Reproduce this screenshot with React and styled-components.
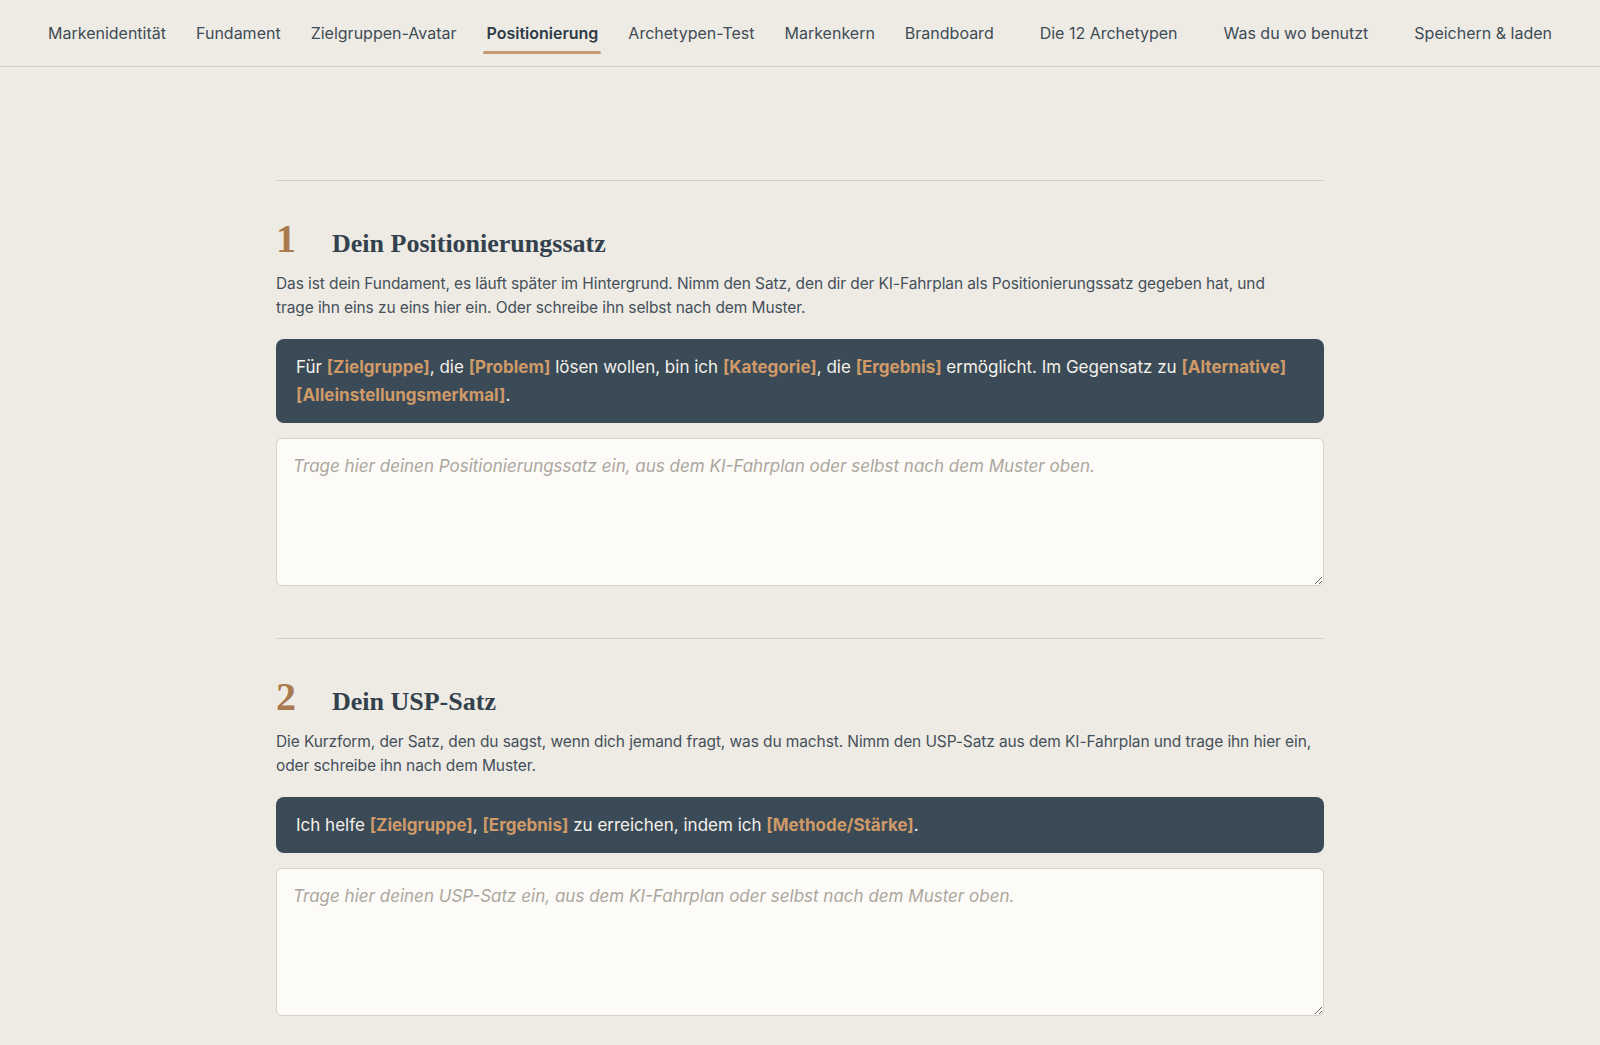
import React from "react";
import styled, { createGlobalStyle } from "styled-components";

const GlobalStyle = createGlobalStyle`
  * { box-sizing: border-box; }
  body {
    margin: 0;
    background: #eeebe4;
    font-family: "Inter", "Liberation Sans", sans-serif;
    color: #3b4753;
  }
`;

const NavBar = styled.nav`
  height: 67px;
  border-bottom: 1px solid #d3d0c8;
  padding: 0 46px;
  display: flex;
  align-items: center;
  justify-content: space-between;
`;

const TabGroup = styled.div`
  display: flex;
  align-items: center;
  gap: 26px;
`;

const Tab = styled.a`
  position: relative;
  padding: 0 2px;
  font-size: 16px;
  line-height: 22px;
  color: ${({ active }) => (active ? "#2d3b47" : "#3f4b56")};
  font-weight: ${({ active }) => (active ? 600 : 400)};
  text-decoration: none;
  cursor: pointer;
  &::after {
    content: "";
    display: ${({ active }) => (active ? "block" : "none")};
    position: absolute;
    left: -1px;
    right: -1px;
    bottom: -10px;
    height: 3px;
    border-radius: 2px;
    background: #c49a74;
  }
`;

const Main = styled.main`
  width: 1048px;
  margin: 0 auto;
  padding-top: 113px;
`;

const Section = styled.section`
  border-top: 1px solid #d4d0c6;
  padding: 34px 0 52px;
`;

const HeadRow = styled.div`
  display: flex;
  align-items: baseline;
  margin-bottom: 10px;
`;

const Num = styled.span`
  width: 56px;
  font-family: "Liberation Serif", "DejaVu Serif", serif;
  font-weight: 700;
  font-size: 40px;
  color: #a97a50;
`;

const Title = styled.h2`
  margin: 0;
  font-family: "Liberation Serif", "DejaVu Serif", serif;
  font-weight: 700;
  font-size: 26px;
  color: #33414d;
`;

const Lead = styled.p`
  margin: 0 0 20px;
  font-size: 15.5px;
  letter-spacing: -0.1px;
  line-height: 23.5px;
  color: #45505a;
`;

const Pattern = styled.div`
  background: #3b4a57;
  border-radius: 8px;
  padding: 14px 20px;
  font-size: 17px;
  line-height: 28px;
  color: #f4f1ea;
  margin-bottom: 15px;
`;

const Slot = styled.span`
  color: #cf9a68;
  font-weight: 700;
`;

const Field = styled.textarea`
  display: block;
  width: 100%;
  height: 148px;
  resize: vertical;
  background: #fcfbf8;
  border: 1px solid #d6d2c9;
  border-radius: 6px;
  padding: 14px 16px;
  font-family: inherit;
  font-size: 17px;
  line-height: 26px;
  color: #3b4753;
  outline: none;
  &::placeholder {
    color: #aca79d;
    font-style: italic;
  }
`;

const tabs = [
  "Markenidentität",
  "Fundament",
  "Zielgruppen-Avatar",
  "Positionierung",
  "Archetypen-Test",
  "Markenkern",
  "Brandboard",
];

const App = () => {
  return (
    <>
      <GlobalStyle />
      <NavBar>
        <TabGroup>
          {tabs.map((t) => (
            <Tab key={t} active={t === "Positionierung" ? 1 : 0}>{t}</Tab>
          ))}
        </TabGroup>
        <Tab>Die 12 Archetypen</Tab>
        <Tab>Was du wo benutzt</Tab>
        <Tab>Speichern &amp; laden</Tab>
      </NavBar>

      <Main>
        {/* section 1 */}
        <Section>
          <HeadRow>
            <Num>1</Num>
            <Title>Dein Positionierungssatz</Title>
          </HeadRow>
          <Lead>
            Das ist dein Fundament, es läuft später im Hintergrund. Nimm den Satz, den dir der KI-Fahrplan als
            Positionierungssatz gegeben hat, und
            <br />
            trage ihn eins zu eins hier ein. Oder schreibe ihn selbst nach dem Muster.
          </Lead>
          <Pattern>
            Für <Slot>[Zielgruppe]</Slot>, die <Slot>[Problem]</Slot> lösen wollen, bin ich <Slot>[Kategorie]</Slot>, die{" "}
            <Slot>[Ergebnis]</Slot> ermöglicht. Im Gegensatz zu <Slot>[Alternative]</Slot>{" "}
            <Slot>[Alleinstellungsmerkmal]</Slot>.
          </Pattern>
          <Field placeholder="Trage hier deinen Positionierungssatz ein, aus dem KI-Fahrplan oder selbst nach dem Muster oben." />
        </Section>

        {/* section 2 */}
        <Section>
          <HeadRow>
            <Num>2</Num>
            <Title>Dein USP-Satz</Title>
          </HeadRow>
          <Lead>
            Die Kurzform, der Satz, den du sagst, wenn dich jemand fragt, was du machst. Nimm den USP-Satz aus dem
            KI-Fahrplan und trage ihn hier ein, oder schreibe ihn nach dem Muster.
          </Lead>
          <Pattern>
            Ich helfe <Slot>[Zielgruppe]</Slot>, <Slot>[Ergebnis]</Slot> zu erreichen, indem ich{" "}
            <Slot>[Methode/Stärke]</Slot>.
          </Pattern>
          <Field placeholder="Trage hier deinen USP-Satz ein, aus dem KI-Fahrplan oder selbst nach dem Muster oben." />
        </Section>
      </Main>
    </>
  );
};

export default App;
